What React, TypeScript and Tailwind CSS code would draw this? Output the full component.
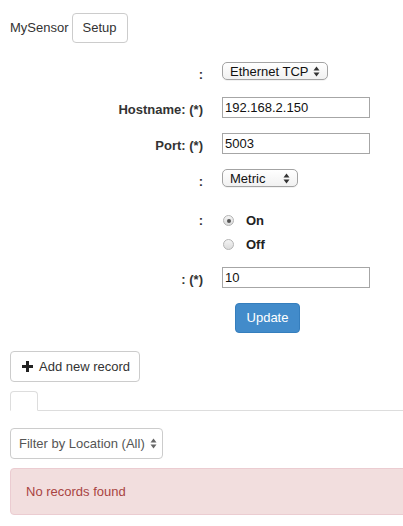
import React from 'react';

// Small up/down arrows drawn by native-looking selects
function Arrows({ color = '#333' }: { color?: string }) {
  return (
    <svg width="7" height="11" viewBox="0 0 7 11" className="shrink-0">
      <path d="M3.5 0.5 L6.5 4.5 L0.5 4.5 Z" fill={color} />
      <path d="M3.5 10.5 L6.5 6.5 L0.5 6.5 Z" fill={color} />
    </svg>
  );
}

function MiniSelect({ value, width }: { value: string; width: string }) {
  return (
    <div
      className={`${width} h-[18px] flex items-center justify-between pl-[7px] pr-[7px] rounded-[5px] border border-[#a3a3a3] bg-gradient-to-b from-white to-[#f1f1f1] text-[13px] text-[#111] shadow-[0_1px_0_rgba(0,0,0,0.05)]`}
    >
      <span className="leading-none">{value}</span>
      <Arrows />
    </div>
  );
}

function TextInput({ value }: { value: string }) {
  return (
    <div className="w-[148px] h-[21px] border border-[#a6a6a6] bg-white flex items-center px-[2px] text-[13px] text-[#111]">
      {value}
    </div>
  );
}

function Radio({ checked, label }: { checked?: boolean; label: string }) {
  return (
    <div className="flex items-center h-[15px]">
      <span className="w-[11px] h-[11px] rounded-full border border-[#b4b4b4] bg-gradient-to-b from-[#f4f4f4] to-[#dcdcdc] flex items-center justify-center ml-[1px]">
        {checked && <span className="w-[4px] h-[4px] rounded-full bg-[#555]" />}
      </span>
      <span className="ml-[12px] font-bold text-[13px] text-[#222]">{label}</span>
    </div>
  );
}

function Row({ label, children, className = '' }: { label: string; children: React.ReactNode; className?: string }) {
  return (
    <div className={`flex ${className}`}>
      <div className="w-[193px] text-right font-bold text-[13px] leading-[15px] text-[#333] pt-[5px]">{label}</div>
      <div className="ml-[19px]">{children}</div>
    </div>
  );
}

export default function App() {
  return (
    <div className="w-[403px] h-[526px] overflow-hidden bg-white pl-[10px] font-['Liberation_Sans',Arial,sans-serif] text-[13px] text-[#333]">
      {/* Header */}
      <div className="flex items-center pt-[13px]">
        <span className="text-[#333]">MySensor</span>
        <button className="ml-[3px] h-[30px] px-[10px] border border-[#ccc] rounded-[4px] bg-white text-[13px] text-[#333]">
          Setup
        </button>
      </div>

      {/* Settings form */}
      <Row label=":" className="mt-[19px] h-[18px]">
        <MiniSelect value="Ethernet TCP" width="w-[106px]" />
      </Row>

      <Row label="Hostname: (*)" className="mt-[17px] h-[21px]">
        <TextInput value="192.168.2.150" />
      </Row>

      <Row label="Port: (*)" className="mt-[15px] h-[21px]">
        <TextInput value="5003" />
      </Row>

      <Row label=":" className="mt-[15px] h-[18px]">
        <MiniSelect value="Metric" width="w-[76px]" />
      </Row>

      <div className="flex mt-[26px] h-[39px]">
        <div className="w-[193px] text-right font-bold leading-[15px] text-[#333]">:</div>
        <div className="ml-[19px] flex flex-col gap-[9px]">
          <Radio checked label="On" />
          <Radio label="Off" />
        </div>
      </div>

      <Row label=": (*)" className="mt-[15px] h-[21px]">
        <TextInput value="10" />
      </Row>

      <div className="mt-[15px] pl-[225px] h-[30px]">
        <button className="h-[30px] w-[65px] rounded-[4px] bg-[#428bca] border border-[#357ebd] text-white text-[13px]">
          Update
        </button>
      </div>

      {/* Records */}
      <button className="mt-[18px] h-[31px] w-[130px] flex items-center pl-[11px] border border-[#ccc] rounded-[4px] bg-white text-[#333] text-[13px]">
        <svg width="11" height="11" viewBox="0 0 11 11" className="mr-[6px]">
          <path d="M4 0 H7 V4 H11 V7 H7 V11 H4 V7 H0 V4 H4 Z" fill="#222" />
        </svg>
        Add new record
      </button>

      <div className="mt-[9px] border-b border-[#ddd] flex">
        <div className="w-[28px] h-[20px] -mb-px border border-[#ddd] border-b-white rounded-t-[4px] bg-white" />
      </div>

      <div className="mt-[17px] w-[153px] h-[31px] flex items-center justify-between pl-[8px] pr-[5px] border border-[#ccc] rounded-[4px] bg-white text-[#555] text-[13px]">
        <span>Filter by Location (All)</span>
        <Arrows color="#666" />
      </div>

      <div className="mt-[9px] h-[47px] flex items-center pl-[15px] border border-[#ebccd1] rounded-[4px] bg-[#f2dede] text-[#a94442] text-[13px] -mr-[4px]">
        No records found
      </div>
    </div>
  );
}
